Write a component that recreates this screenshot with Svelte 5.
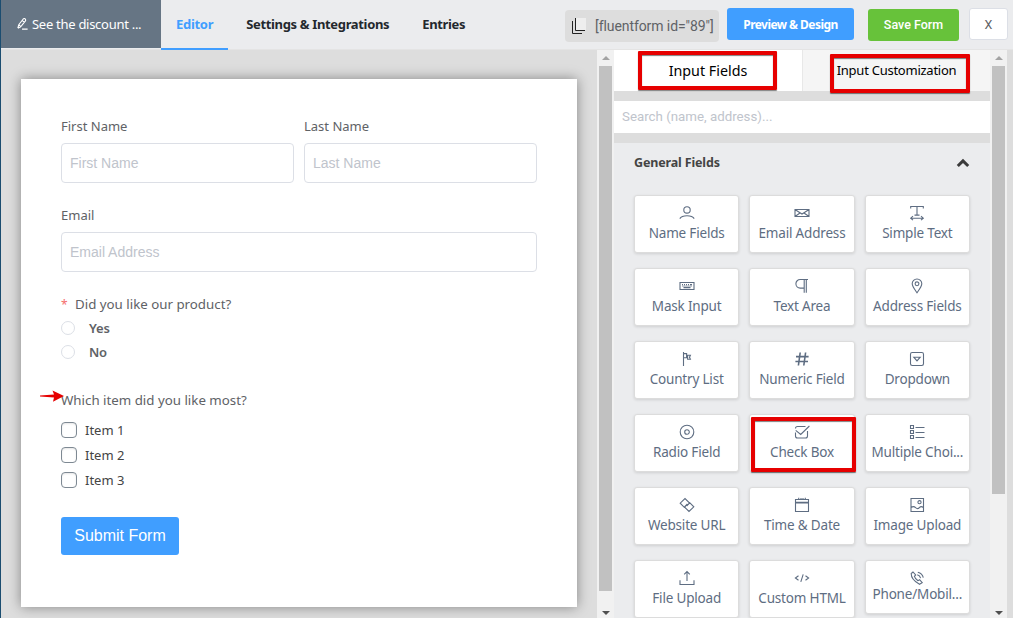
<script lang="ts">
  const tabs = ["Editor", "Settings & Integrations", "Entries"];

  const fields = [
    { label: "Name Fields", icon: "user" },
    { label: "Email Address", icon: "mail" },
    { label: "Simple Text", icon: "text" },
    { label: "Mask Input", icon: "keyboard" },
    { label: "Text Area", icon: "paragraph" },
    { label: "Address Fields", icon: "pin" },
    { label: "Country List", icon: "flag" },
    { label: "Numeric Field", icon: "hash" },
    { label: "Dropdown", icon: "dropdown" },
    { label: "Radio Field", icon: "target" },
    { label: "Check Box", icon: "tick" },
    { label: "Multiple Choi...", icon: "list" },
    { label: "Website URL", icon: "link" },
    { label: "Time & Date", icon: "calendar" },
    { label: "Image Upload", icon: "image" },
    { label: "File Upload", icon: "upload" },
    { label: "Custom HTML", icon: "code" },
    { label: "Phone/Mobil...", icon: "phone" },
  ];

  // stroke paths on a 16x16 grid
  const icons: Record<string, string> = {
    user: "M8 1.7a3.2 3.2 0 1 1 0 6.4a3.2 3.2 0 0 1 0-6.4M.8 13.6Q2.5 10.7 8 10.7T15.2 13.6",
    mail: "M1 4.5h14v7H1zM1.3 4.8L8 9l6.7-4.2M1.3 11.3L6 8M14.7 11.3L10 8",
    text: "M1.7 3.4V1.5h12.6v1.9M8 1.5v8.6M5.5 10.1h5M1.7 13.2h12.6M4 11.2l-2.3 2l2.3 2M12 11.2l2.3 2l-2.3 2",
    keyboard: "M1 4.5h14v7H1zM3 6.6h1M5 6.6h1M7 6.6h1M9 6.6h1M11 6.6h2M3.5 8.1h1M5.5 8.1h1M7.5 8.1h1M9.5 8.1h1M11.5 8.1h1M4.5 9.6h7",
    paragraph: "M14 1.5H6.2a4.3 4.3 0 0 0 0 8.6H10M10.2 1.5v13.3M12.3 1.5v13.3",
    pin: "M8 14.8C5.5 11.3 3.2 8.3 3.2 5.8a4.8 4.8 0 0 1 9.6 0C12.8 8.3 10.5 11.3 8 14.8zM8 3.9a1.9 1.9 0 1 1 0 3.8a1.9 1.9 0 0 1 0-3.8",
    flag: "M4.5 1v14M4.5 2.6H7.6v4.2H4.5M7.6 4.3h3.8l-.9 1.9l.9 2H8.6V4.3",
    hash: "M6.2 1.5L4.4 14.5M11.6 1.5L9.8 14.5M2 5.6h12.6M1.4 10.5H14",
    dropdown: "M3.2 1.5h9.6q1.7 0 1.7 1.7v9.6q0 1.7-1.7 1.7H3.2q-1.7 0-1.7-1.7V3.2q0-1.7 1.7-1.7zM4.8 6.2h6.4L8 9.8z",
    target: "M8 1.2a6.8 6.8 0 1 1 0 13.6a6.8 6.8 0 0 1 0-13.6M8 5.7a2.3 2.3 0 1 1 0 4.6a2.3 2.3 0 0 1 0-4.6",
    tick: "M11.5 2.5H3.5q-2 0-2 2M1.5 8.5v3.5q0 2 2 2h8q2 0 2-2V7M1.7 6.4l5 4L15.4 2",
    list: "M1.5 1.5h3v3h-3zM1.5 6.5h3v3h-3zM1.5 11.5h3v3h-3zM6.5 3.5H15.5M6.5 8.5H15.5M6.5 13.5H15.5",
    link: "M6.7 9.4L5.3 10.3L1.2 6.2L6 1.5L10.6 6.1L7.6 9M9.3 6.6L10.7 5.7L14.8 9.8L10 14.5L5.4 9.9L8.4 7",
    calendar: "M1.5 2.5h13v12h-13zM1.5 6h13M1.5 5.3h13M4.7 .8v2M7 1v1M9 1v1M11.3 .8v2",
    image: "M2 1.5h12.5v13h-12.5zM2 10.6q2.5-2 4.6 0t3.8 0t4 0M10.5 3.6a1.6 1.6 0 1 1 0 3.2a1.6 1.6 0 0 1 0-3.2",
    upload: "M1 10.3v4.2h14v-4.2M8 11V1.8M5.2 4.3L8 1.5l2.8 2.8",
    code: "M4.5 5.7L1.4 8l3.1 2.3M11.5 5.7L14.6 8l-3.1 2.3M9.2 4.3L6.8 11.8",
    phone: "M4 2L2.2 3.5Q2 9.5 10.5 14.3L13.2 12.7L10.6 9.7L9 10.7Q6.2 8.8 5.4 6.3L6.7 5zM8.2 4.8q2.7.6 3.4 3.3M8.8 2.2q4.5 1 5.5 5.5",
  };
</script>

<div class="page">
  <header>
    <div class="form-title">
      <svg viewBox="0 0 14 14" width="13" height="13">
        <path d="M2 11L3 7.3L7.4 1.6Q9-.2 10 1.2T9.5 4L5 9.6L2 11M6.8 2.8l2.3 1.8M3.3 7.4l1.8 1.8M6.5 12H12.5" />
      </svg>
      <span>See the discount ...</span>
    </div>
    <nav>
      {#each tabs as tab, i}
        <a href="#{i}" class:active={i === 0}>{tab}</a>
      {/each}
    </nav>
    <div class="actions">
      <div class="shortcode">
        <svg viewBox="0 0 16 18" width="16" height="18">
          <rect x="4" y="1" width="11" height="12" fill="#eee" />
          <path d="M4.5 1v12.5H14" stroke="#222" />
          <path d="M1.5 4v12.5H11" stroke="#222" />
        </svg>
        <span>[fluentform id="89"]</span>
      </div>
      <button class="preview">Preview &amp; Design</button>
      <button class="save">Save Form</button>
      <button class="close">X</button>
    </div>
  </header>

  <main>
    <section class="canvas">
      <div class="form">
        <div class="row">
          <div class="group">
            <label for="first">First Name</label>
            <input id="first" placeholder="First Name" />
          </div>
          <div class="group">
            <label for="last">Last Name</label>
            <input id="last" placeholder="Last Name" />
          </div>
        </div>
        <div class="group email">
          <label for="email">Email</label>
          <input id="email" placeholder="Email Address" />
        </div>
        <div class="question"><i>*</i><span>Did you like our product?</span></div>
        <div class="radios">
          <div class="radio"><b></b><span>Yes</span></div>
          <div class="radio"><b></b><span>No</span></div>
        </div>
        <div class="question second">
          <svg class="arrow" viewBox="0 0 24 12" width="24" height="12">
            <path d="M0 5.6L14 4.6L12.5 .6L24 6L13 11.7L14 7.4L0 6.6z" />
          </svg>
          <span>Which item did you like most?</span>
        </div>
        <div class="checks">
          {#each [1, 2, 3] as n}
            <div class="check"><b></b><span>Item {n}</span></div>
          {/each}
        </div>
        <button class="submit">Submit Form</button>
      </div>
    </section>

    <div class="scrollbar">
      <span class="up"></span>
      <div class="thumb long"></div>
      <span class="down"></span>
    </div>

    <aside>
      <div class="side-tabs">
        <div class="side-tab on">
          Input Fields
          <div class="mark mark-fields"></div>
        </div>
        <div class="side-tab">
          Input Customization
          <div class="mark mark-custom"></div>
        </div>
      </div>
      <div class="search"><input placeholder="Search (name, address)..." /></div>
      <div class="panel">
        <div class="panel-head">
          <h5>General Fields</h5>
          <svg viewBox="0 0 14 10" width="14" height="10"><path d="M1.8 8L7 2.9L12.2 8" /></svg>
        </div>
        <div class="grid">
          {#each fields as field}
            <div class="card" class:short={field.icon === "phone"}>
              <svg class={field.icon} viewBox="0 0 16 16" width="16" height="16">
                <path d={icons[field.icon]} />
              </svg>
              <span>{field.label}</span>
              {#if field.icon === "tick"}
                <div class="mark mark-check"></div>
              {/if}
            </div>
          {/each}
        </div>
      </div>
    </aside>

    <div class="scrollbar">
      <span class="up"></span>
      <div class="thumb"></div>
      <span class="down"></span>
    </div>
  </main>
</div>

<style>
  :global(body) {
    margin: 0;
    overflow: hidden;
  }
  .page {
    width: 1013px;
    height: 618px;
    box-sizing: border-box;
    border-left: 1px solid #1b4d70;
    background: #ddd;
    overflow: hidden;
    display: flex;
    flex-direction: column;
    font-family: "Noto Sans", "Open Sans", sans-serif;
    font-size: 13.5px;
    color: #606266;
  }
  .page * {
    box-sizing: border-box;
  }
  svg {
    display: block;
    flex: none;
    fill: none;
  }
  span,
  label,
  a {
    white-space: nowrap;
  }

  header {
    display: flex;
    height: 50px;
    flex: none;
    background: #ebecee;
    border-bottom: 1px solid #e4e4e4;
  }
  .form-title {
    width: 160px;
    height: 48px;
    display: flex;
    align-items: center;
    gap: 3px;
    padding-left: 15px;
    background: #667584;
    color: #fff;
    font-size: 13px;
    letter-spacing: -0.28px;
  }
  .form-title svg {
    stroke: #fff;
    stroke-width: 1.2;
  }
  nav {
    display: flex;
    height: 50px;
  }
  nav a {
    padding: 0 15px;
    line-height: 48px;
    font-size: 13px;
    font-weight: 700;
    letter-spacing: -0.34px;
    color: #23282d;
    text-decoration: none;
    margin-right: 3px;
  }
  nav a.active {
    color: #409eff;
    border-bottom: 2px solid #409eff;
    letter-spacing: -0.3px;
  }
  .actions {
    display: flex;
    align-items: flex-start;
    margin-left: auto;
    padding: 8px 5px 0 0;
  }
  button {
    border: 0;
    border-radius: 3px;
    padding: 0;
    color: #fff;
    font-family: inherit;
    white-space: nowrap;
  }
  .shortcode {
    width: 154px;
    height: 32px;
    margin: 2px 8px 0 0;
    padding-left: 6px;
    display: flex;
    align-items: center;
    gap: 8px;
    border-radius: 4px;
    background: #ddd;
    color: #606266;
    font: 14px Roboto, sans-serif;
    letter-spacing: -0.08px;
  }
  .preview {
    width: 127px;
    height: 32px;
    background: #409eff;
    font-size: 12px;
    font-weight: 700;
    letter-spacing: -0.55px;
  }
  .save {
    width: 91px;
    height: 32px;
    margin: 1px 10px 0 14px;
    padding-bottom: 2px;
    background: #67c23a;
    font: 500 12.5px Roboto, sans-serif;
  }
  .close {
    width: 39px;
    height: 32px;
    border: 1px solid #dcdfe6;
    background: #fff;
    color: #606266;
    font: 12.5px Roboto, sans-serif;
  }

  main {
    display: flex;
    flex: 1;
    min-height: 0;
  }
  .canvas {
    width: 596px;
    padding: 29px 20px 11px;
  }
  .form {
    height: 528px;
    padding: 36px 40px 0;
    background: #fff;
    box-shadow: 0 0 12px rgba(0, 0, 0, 0.4);
  }
  .row {
    display: flex;
    gap: 10px;
  }
  .group {
    flex: 1;
    display: flex;
    flex-direction: column;
  }
  .group label {
    height: 28px;
    line-height: 22px;
    font-size: 13px;
  }
  .group input {
    width: 100%;
    height: 40px;
    padding: 0 8px;
    border: 1px solid #dcdfe6;
    border-radius: 4px;
    font: 14px "Liberation Sans", sans-serif;
  }
  input::placeholder {
    color: #c0c4cc;
    opacity: 1;
  }
  .email {
    margin-top: 21px;
  }
  .question {
    position: relative;
    height: 22px;
    margin-top: 21px;
    line-height: 22px;
    font-size: 13.3px;
  }
  .question i {
    display: inline-block;
    width: 14px;
    font-style: normal;
    font-size: 12px;
    color: #f56c6c;
  }
  .radio {
    height: 24px;
    display: flex;
    align-items: center;
    gap: 14px;
    font-size: 13px;
    font-weight: 600;
    letter-spacing: -0.2px;
  }
  .radio b {
    width: 14px;
    height: 14px;
    border: 1px solid #dcdfe6;
    border-radius: 50%;
  }
  .radios {
    padding-top: 1px;
  }
  .second {
    margin-top: 25px;
  }
  .arrow {
    position: absolute;
    left: -21px;
    top: 1px;
    fill: #e60000;
  }
  .checks {
    margin-top: 6px;
  }
  .check {
    height: 25px;
    display: flex;
    align-items: center;
    gap: 8px;
    font-size: 13px;
    color: #444;
  }
  .check b {
    width: 16px;
    height: 16px;
    border: 1px solid #7e8993;
    border-radius: 4px;
    box-shadow: inset 0 1px 2px rgba(0, 0, 0, 0.1);
  }
  .submit {
    display: block;
    width: 118px;
    height: 38px;
    margin-top: 25px;
    background: #409eff;
    font: 16px "Liberation Sans", sans-serif;
  }

  .scrollbar {
    width: 17px;
    display: flex;
    flex-direction: column;
    align-items: center;
    background: #f1f1f1;
  }
  .thumb {
    width: 13px;
    height: 428px;
    margin-bottom: auto;
    background: #c1c1c1;
  }
  .long {
    height: 525px;
  }
  .up,
  .down {
    border: 4px solid transparent;
    border-top-width: 0;
    border-bottom: 4px solid #a3a3a3;
    margin: 6px 0;
  }
  .down {
    border-width: 4px 4px 0;
    border-top-color: #505050;
    margin: 0 0 3px;
  }

  aside {
    width: 376px;
    display: flex;
    flex-direction: column;
  }
  .side-tabs {
    display: flex;
    height: 41px;
    flex: none;
    line-height: 41px;
    text-align: center;
    color: #000;
  }
  .side-tab {
    position: relative;
    width: 188px;
    background: #f5f5f5;
    border-left: 1px solid #e8e8e8;
    font-size: 13px;
    letter-spacing: -0.25px;
  }
  .on {
    background: #fff;
    border: 0;
    font-size: 14.3px;
    letter-spacing: 0;
  }
  .mark {
    position: absolute;
    border: 4px solid #e60000;
    border-radius: 1px;
    box-shadow: 0 1px 1px rgba(0, 0, 0, 0.5), inset 0 1px 1px rgba(0, 0, 0, 0.5);
    z-index: 1;
  }
  .mark-fields {
    left: 24px;
    top: 1px;
    width: 139px;
    height: 39px;
  }
  .mark-custom {
    left: 27px;
    top: 4px;
    width: 140px;
    height: 39px;
  }
  .mark-check {
    left: 1px;
    top: 2px;
    width: 105px;
    height: 55px;
  }
  .search {
    flex: none;
    margin: 10px 0;
  }
  .search input {
    display: block;
    width: 100%;
    height: 32px;
    padding: 0 8px 2px;
    border: 0;
    font: 13.3px Roboto, sans-serif;
  }
  .panel {
    flex: 1;
    padding: 0 20px;
    background: #ebecee;
  }
  .panel-head {
    display: flex;
    align-items: center;
    justify-content: space-between;
    height: 39px;
    margin-bottom: 13px;
  }
  .panel-head svg {
    stroke: #3b3b3b;
    stroke-width: 3;
  }
  h5 {
    margin: 0;
    font-size: 12.5px;
    font-weight: 700;
    letter-spacing: -0.15px;
    color: #444;
  }
  .grid {
    display: grid;
    grid-template-columns: repeat(3, 1fr);
    gap: 15px 10px;
  }
  .card {
    position: relative;
    height: 58px;
    display: flex;
    flex-direction: column;
    align-items: center;
    padding-top: 9px;
    border: 1px solid #dcdcdc;
    border-radius: 3px;
    background: #fff;
    box-shadow: 0 1px 3px rgba(0, 0, 0, 0.12);
    color: #5e6d82;
    line-height: 20px;
  }
  .card span {
    margin-top: 2px;
    font-size: 13.5px;
    letter-spacing: -0.18px;
  }
  .card svg {
    stroke: #5e6d82;
    stroke-width: 1.1;
  }
  .card .hash {
    stroke-width: 1.6;
  }
  .short {
    height: 54px;
  }
  .card.short span {
    margin-top: -2px;
  }
</style>
